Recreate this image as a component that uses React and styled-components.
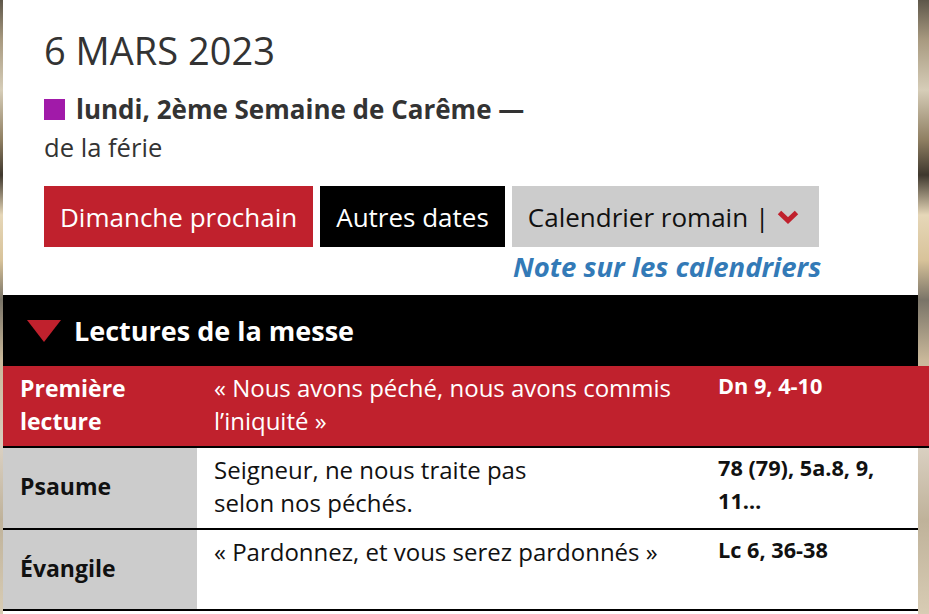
import React from "react";
import styled, { createGlobalStyle } from "styled-components";

const GlobalStyle = createGlobalStyle`
  html, body {
    margin: 0;
    padding: 0;
  }
  body {
    font-family: "Open Sans", "Liberation Sans", sans-serif;
    overflow: hidden;
    background: linear-gradient(
      to bottom,
      #5e574a 0px,
      #a89a80 40px,
      #d6cdb8 90px,
      #8f7f62 140px,
      #3f382e 175px,
      #e6d7b8 215px,
      #d8c39a 260px,
      #7a7468 300px,
      #c9b89a 360px,
      #d9cfc0 450px,
      #bfb29a 520px,
      #d8ccb4 614px
    );
  }
`;

const Panel = styled.div`
  width: 915px;
  margin-left: 3px;
  background: #fff;
  min-height: 614px;
`;

const Intro = styled.div`
  padding: 24px 0 0 41px;
  color: #333;
`;

const Title = styled.h1`
  margin: 0;
  font-size: 38px;
  font-weight: 400;
  line-height: 52px;
  color: #333;
`;

const Season = styled.div`
  display: flex;
  align-items: center;
  margin-top: 17px;
  font-size: 26px;
  font-weight: 700;
  line-height: 32px;
`;

const Swatch = styled.span`
  width: 21px;
  height: 21px;
  margin-right: 11px;
  background: ${(p) => p.color};
`;

const Feast = styled.div`
  margin-top: 4px;
  font-size: 25.6px;
  line-height: 38px;
`;

const Actions = styled.div`
  display: inline-flex;
  flex-direction: column;
  align-items: flex-end;
  margin-top: 19px;
`;

const ButtonRow = styled.div`
  display: flex;
  gap: 7px;
`;

const Button = styled.button`
  display: flex;
  align-items: center;
  gap: 8px;
  height: 61px;
  padding: 0 ${(p) => (p.wide ? "20px" : "16px")} 0 16px;
  border: none;
  font-family: inherit;
  font-size: 26px;
  background: ${(p) => p.bg};
  color: ${(p) => p.fg};
`;

const Chevron = () => (
  <svg width="22" height="14" viewBox="0 0 22 14">
    <polyline
      points="2.5,2.5 11,10.5 19.5,2.5"
      fill="none"
      stroke="#c0212d"
      strokeWidth="5"
      strokeLinejoin="miter"
    />
  </svg>
);

const NoteLink = styled.a`
  margin-top: 4px;
  margin-right: -2px;
  font-size: 27.5px;
  font-weight: 700;
  font-style: italic;
  color: #337ab7;
  line-height: 32px;
`;

const Readings = styled.section`
  margin-top: 12px;
`;

const SectionHead = styled.div`
  display: flex;
  align-items: center;
  height: 71px;
  padding-left: 24px;
  background: #000;
  color: #fff;
  font-size: 27px;
  font-weight: 700;
`;

const Triangle = styled.span`
  width: 0;
  height: 0;
  margin-right: 13px;
  border-left: 17px solid transparent;
  border-right: 17px solid transparent;
  border-top: 22px solid #c0212d;
`;

const Row = styled.div`
  display: grid;
  grid-template-columns: 194px 504px 1fr;
  height: ${(p) => p.h}px;
  border-bottom: 2px solid #000;
  background: ${(p) => (p.active ? "#c0212d" : "#fff")};
  color: ${(p) => (p.active ? "#fff" : "#111")};
  margin-right: ${(p) => (p.active ? "-11px" : "0")};
`;

const Label = styled.div`
  display: flex;
  align-items: center;
  padding: 0 17px 3px;
  font-size: 23px;
  font-weight: 700;
  line-height: 33px;
  background: ${(p) => (p.active ? "transparent" : "#ccc")};
`;

const Quote = styled.div`
  padding: 5px 17px 0;
  font-size: 24px;
  line-height: 33px;
`;

const Ref = styled.div`
  padding: 3px 17px 0;
  font-size: 21.7px;
  font-weight: 700;
  line-height: 33px;
`;

const readings = [
  {
    label: "Première lecture",
    text: "« Nous avons péché, nous avons commis l’iniquité »",
    ref: "Dn 9, 4-10",
    active: true,
    h: 80,
  },
  {
    label: "Psaume",
    text: (
      <>
        Seigneur, ne nous traite pas
        <br />
        selon nos péchés.
      </>
    ),
    ref: "78 (79), 5a.8, 9, 11…",
    h: 80,
  },
  {
    label: "Évangile",
    text: "« Pardonnez, et vous serez pardonnés »",
    ref: "Lc 6, 36-38",
    h: 79,
  },
];

export default function App() {
  return (
    <>
      <GlobalStyle />
      <Panel>
        <Intro>
          <Title>6 MARS 2023</Title>
          <Season>
            <Swatch color="#a11aa9" />
            lundi, 2ème Semaine de Carême —
          </Season>
          <Feast>de la férie</Feast>
          <Actions>
            <ButtonRow>
              <Button bg="#c0212d" fg="#fff">Dimanche prochain</Button>
              <Button bg="#000" fg="#fff">Autres dates</Button>
              <Button bg="#ccc" fg="#111" wide>
                Calendrier romain | <Chevron />
              </Button>
            </ButtonRow>
            <NoteLink>Note sur les calendriers</NoteLink>
          </Actions>
        </Intro>
        <Readings>
          <SectionHead>
            <Triangle />
            Lectures de la messe
          </SectionHead>
          {readings.map((r) => (
            <Row key={r.ref} active={r.active} h={r.h}>
              <Label active={r.active}>{r.label}</Label>
              <Quote>{r.text}</Quote>
              <Ref>{r.ref}</Ref>
            </Row>
          ))}
        </Readings>
      </Panel>
    </>
  );
}
